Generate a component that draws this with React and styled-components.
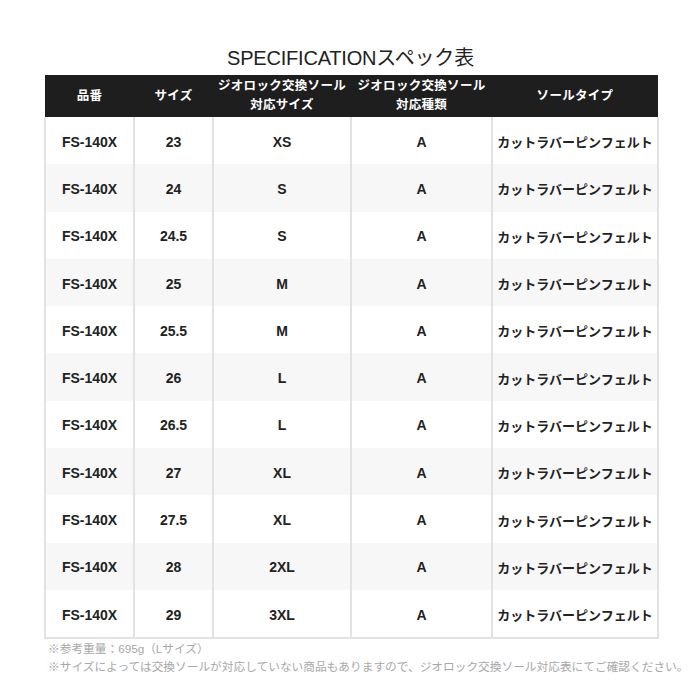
import React from "react";
import styled, { createGlobalStyle } from "styled-components";

const Global = createGlobalStyle`
  html, body { margin: 0; padding: 0; background: #fff; }
  body { font-family: "Liberation Sans", "Noto Sans CJK JP", sans-serif; }
`;

const Page = styled.div`
  width: 700px;
  padding: 48px 0 0 44px;
  box-sizing: border-box;
`;

const Title = styled.h2`
  margin: 0 0 6px;
  width: 613px;
  text-align: center;
  font-size: 20px;
  font-weight: 400;
  line-height: 21px;
  color: #222;
  letter-spacing: -0.2px;
`;

const Table = styled.table`
  width: 613px;
  table-layout: fixed;
  border-collapse: collapse;
  border-bottom: 2px solid #e2e2e2;
`;

const Th = styled.th`
  background: #1e1e1e;
  color: #fff;
  font-size: 12.5px;
  font-weight: 700;
  line-height: 19px;
  height: 42px;
  padding: 0;
  text-align: center;
  white-space: nowrap;
  letter-spacing: 0.3px;
`;

const Tr = styled.tr`
  background: ${(p) => (p.$alt ? "#f7f7f7" : "#fff")};
`;

const Td = styled.td`
  height: 45.3px;
  padding: 2px 0 0;
  text-align: center;
  font-size: ${(p) => (p.$jp ? "13px" : "14px")};
  font-weight: 700;
  color: #222;
  border-left: 2px solid #e2e2e2;
  border-right: 2px solid #e2e2e2;
  white-space: nowrap;
  overflow: hidden;
`;

const Notes = styled.div`
  margin-top: 1px;
  padding-left: 4px;
  font-size: 11.7px;
  line-height: 18px;
  color: #a8a8a8;
  white-space: nowrap;
`;

const rows = [
  ["23", "XS"],
  ["24", "S"],
  ["24.5", "S"],
  ["25", "M"],
  ["25.5", "M"],
  ["26", "L"],
  ["26.5", "L"],
  ["27", "XL"],
  ["27.5", "XL"],
  ["28", "2XL"],
  ["29", "3XL"],
];

export default function App() {
  return (
    <>
      <Global />
      <Page>
        <Title>SPECIFICATIONスペック表</Title>
        <Table>
          <colgroup>
            <col style={{ width: 89 }} />
            <col style={{ width: 79 }} />
            <col style={{ width: 138 }} />
            <col style={{ width: 141 }} />
            <col style={{ width: 166 }} />
          </colgroup>
          <thead>
            <tr>
              <Th>品番</Th>
              <Th>サイズ</Th>
              <Th>
                ジオロック交換ソール
                <br />
                対応サイズ
              </Th>
              <Th>
                ジオロック交換ソール
                <br />
                対応種類
              </Th>
              <Th>ソールタイプ</Th>
            </tr>
          </thead>
          <tbody>
            {rows.map(([size, sole], i) => (
              <Tr key={i} $alt={i % 2 === 1}>
                <Td>FS-140X</Td>
                <Td>{size}</Td>
                <Td>{sole}</Td>
                <Td>A</Td>
                <Td $jp>カットラバーピンフェルト</Td>
              </Tr>
            ))}
          </tbody>
        </Table>
        <Notes>
          ※参考重量：695g（Lサイズ）
          <br />
          ※サイズによっては交換ソールが対応していない商品もありますので、ジオロック交換ソール対応表にてご確認ください。
        </Notes>
      </Page>
    </>
  );
}
